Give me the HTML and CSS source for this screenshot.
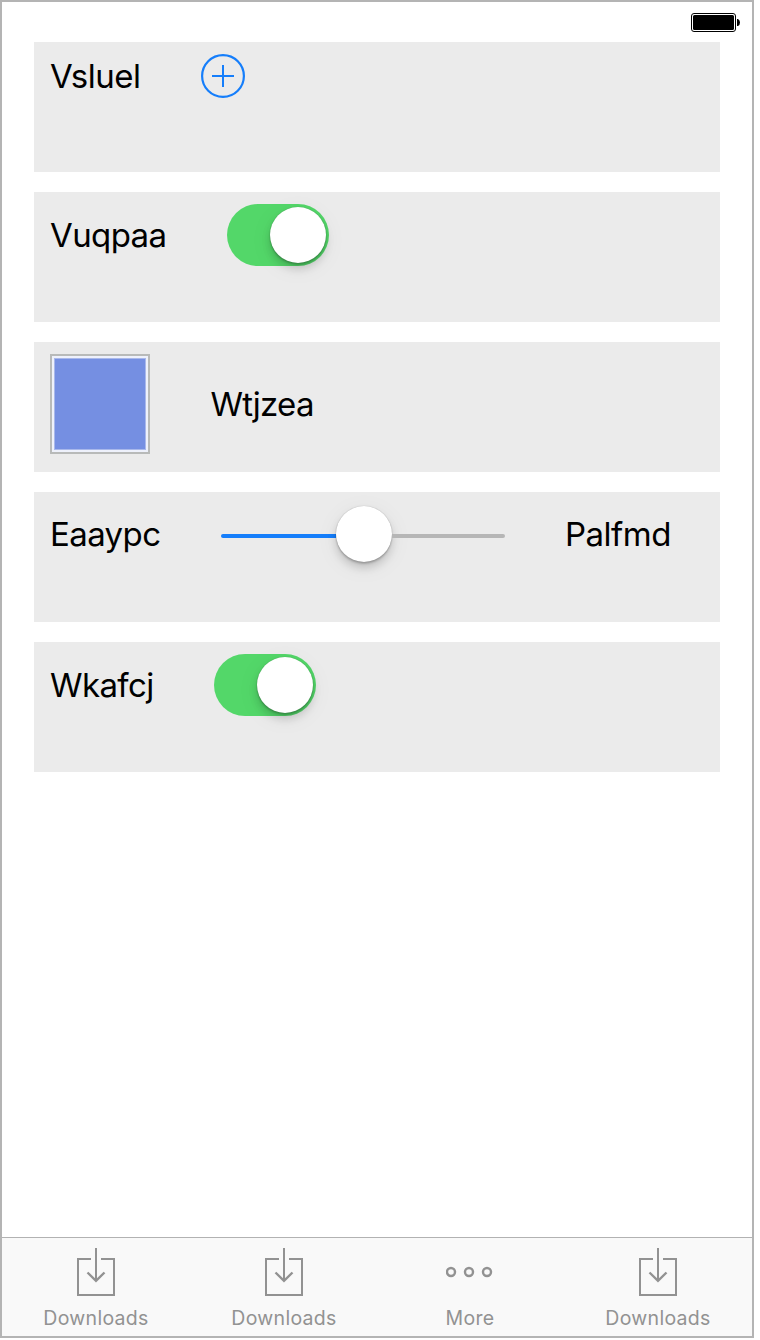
FILE: index.html
```html
<!DOCTYPE html>
<html lang="en">
<head>
<meta charset="utf-8">
<title>Settings</title>
<link rel="stylesheet" href="styles.css">
</head>
<body>
<svg class="defs" width="0" height="0" aria-hidden="true">
  <symbol id="download" viewBox="0 0 40 50">
    <path d="M15 12H2v36h36V12H25M20 1v33" fill="none" stroke="#929292" stroke-width="2"/>
    <path d="M11.500 25.500l8.500 8.300 8.500-8.300" fill="none" stroke="#929292" stroke-width="2.400"/>
  </symbol>
</svg>
<div class="phone">
  <header class="status">
    <svg class="battery" width="50" height="20" viewBox="0 0 50 20">
      <rect x="1.500" y="1.500" width="44" height="18" rx="2.500" fill="#fff" stroke="#000"/>
      <rect x="3" y="3" width="41" height="15" rx="1.500" fill="#000"/>
      <path d="M47 7h1q2 1 2 3.500T48 14h-1z" fill="#000"/>
    </svg>
  </header>
  <main class="list">
    <section class="row">
      <span class="label vsluel">Vsluel</span>
      <svg class="add" width="44" height="44" viewBox="0 0 44 44" fill="none" stroke="#157efb" stroke-width="2">
        <circle cx="22" cy="22" r="20.900" stroke-width="2.200"/>
        <path d="M22 11v22M11 22h22"/>
      </svg>
    </section>
    <section class="row">
      <span class="label vuqpaa">Vuqpaa</span>
      <div class="switch"><div class="knob"></div></div>
    </section>
    <section class="row">
      <div class="swatch"><div class="color"></div></div>
      <span class="label wtjzea">Wtjzea</span>
    </section>
    <section class="row">
      <span class="label eaaypc">Eaaypc</span>
      <div class="slider"><div class="fill"></div><div class="knob"></div><div class="rest"></div></div>
      <span class="label palfmd">Palfmd</span>
    </section>
    <section class="row">
      <span class="label wkafcj">Wkafcj</span>
      <div class="switch"><div class="knob"></div></div>
    </section>
  </main>
  <nav class="tabs">
    <div class="tab"><svg width="40" height="50"><use href="#download"/></svg><span>Downloads</span></div>
    <div class="tab"><svg width="40" height="50"><use href="#download"/></svg><span>Downloads</span></div>
    <div class="tab more"><svg width="48" height="50" viewBox="0 0 48 50" fill="none" stroke="#929292" stroke-width="2.400"><circle cx="5" cy="25" r="4"/><circle cx="23" cy="25" r="4"/><circle cx="41" cy="25" r="4"/></svg><span>More</span></div>
    <div class="tab last"><svg width="40" height="50"><use href="#download"/></svg><span>Downloads</span></div>
  </nav>
</div>
</body>
</html>
```

FILE: styles.css
```css
* { box-sizing: border-box; }
body { margin: 0; background: #fff; font-family: Inter, "Liberation Sans", sans-serif; color: #000; }
.defs { display: block; height: 0; }
.phone { width: 754px; height: 1338px; border: 2px solid #b4b4b4; display: flex; flex-direction: column; }
.status { height: 40px; padding: 10px 12px 0 0; display: flex; justify-content: flex-end; align-items: flex-start; }
.list { flex: 1; padding: 0 32px; display: flex; flex-direction: column; gap: 20px; }
.row { height: 130px; padding: 12px 16px; background: #ebebeb; display: flex; align-items: flex-start; }
.label { flex: none; font-size: 33px; line-height: 44px; white-space: nowrap; }
.vsluel { width: 151px; letter-spacing: -0.5px; }
.vuqpaa { width: 177px; padding-top: 9px; letter-spacing: -0.6px; }
.wtjzea { padding-top: 28px; letter-spacing: -0.7px; }
.eaaypc { width: 171px; padding-top: 8px; letter-spacing: -0.6px; }
.palfmd { padding-top: 8px; letter-spacing: -0.5px; }
.wkafcj { width: 164px; padding-top: 9px; letter-spacing: -0.6px; }
.switch { width: 102px; height: 62px; padding: 3px; border-radius: 31px; background: #53d769; display: flex; justify-content: flex-end; }
.knob { flex: none; width: 56px; height: 56px; border-radius: 50%; background: #fff; box-shadow: 0 0 1px rgba(0,0,0,.3), 0 2px 2px rgba(0,0,0,.19), 0 6px 8px rgba(0,0,0,.15), 0 5px 24px rgba(0,0,0,.06); }
.swatch { width: 100px; height: 100px; margin-right: 60.5px; padding: 2px; border: 2px solid #b8bab9; background: #eef1fb; }
.color { height: 92px; border: 1px solid #a9b8eb; background: #758fe2; }
.slider { width: 284px; height: 56px; margin: 2px 60px 0 0; display: flex; align-items: center; }
.fill, .rest { height: 4px; margin-top: 4px; }
.fill { width: 115px; background: #157efb; border-radius: 2px 0 0 2px; }
.rest { flex: 1; background: #b6b6b6; border-radius: 0 2px 2px 0; }
.tabs { height: 99px; border-top: 1px solid #b2b2b2; background: #f9f9f9; display: grid; grid-template-columns: 188px 188px 184px 190px; }
.tab { display: flex; flex-direction: column; align-items: center; padding-top: 9px; color: #929292; font-size: 19.5px; line-height: 24px; letter-spacing: .3px; }
.tab svg { display: block; }
.tab span { margin-top: 9px; }
.last { padding-left: 2px; }
```
